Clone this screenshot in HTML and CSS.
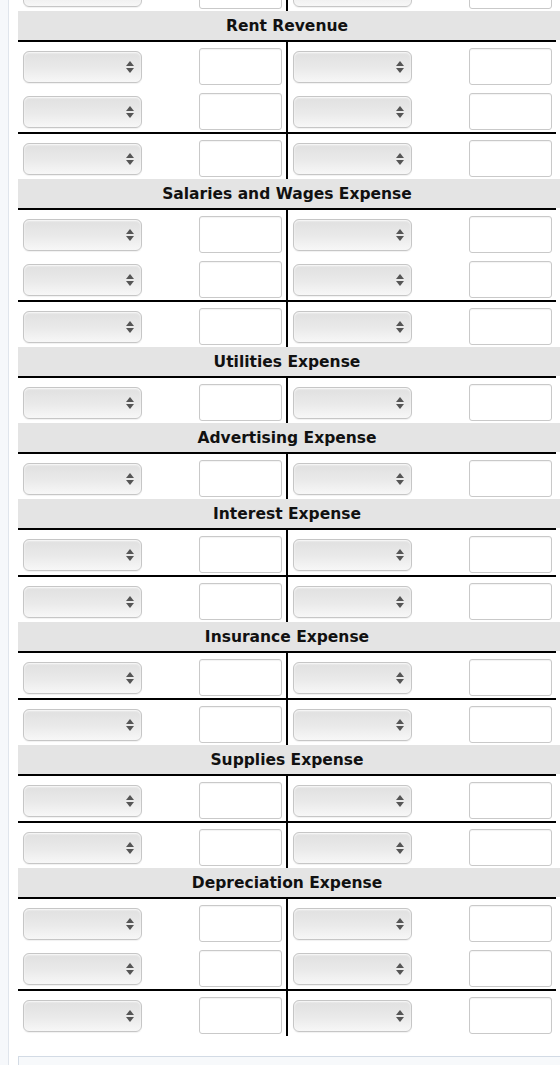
FILE: index.html
```html
<!DOCTYPE html>
<html lang="en">
<head>
<meta charset="utf-8">
<title>T-Accounts</title>
<link rel="stylesheet" href="styles.css">
</head>
<body>
<div class="rail"></div>
<main class="main">
  <div class="ledger">
    <!-- closing row of the account above -->
    <div class="acct-body lead">
      <div class="row">
        <div class="side"><span class="pick"><select></select></span><input type="text"></div>
        <div class="side"><span class="pick"><select></select></span><input type="text"></div>
      </div>
    </div>

    <section class="acct">
      <h3 class="acct-title">Rent Revenue</h3>
      <div class="acct-body">
        <div class="row"><div class="side"><span class="pick"><select></select></span><input type="text"></div><div class="side"><span class="pick"><select></select></span><input type="text"></div></div>
        <div class="row"><div class="side"><span class="pick"><select></select></span><input type="text"></div><div class="side"><span class="pick"><select></select></span><input type="text"></div></div>
        <div class="row total"><div class="side"><span class="pick"><select></select></span><input type="text"></div><div class="side"><span class="pick"><select></select></span><input type="text"></div></div>
      </div>
    </section>

    <section class="acct">
      <h3 class="acct-title">Salaries and Wages Expense</h3>
      <div class="acct-body">
        <div class="row"><div class="side"><span class="pick"><select></select></span><input type="text"></div><div class="side"><span class="pick"><select></select></span><input type="text"></div></div>
        <div class="row"><div class="side"><span class="pick"><select></select></span><input type="text"></div><div class="side"><span class="pick"><select></select></span><input type="text"></div></div>
        <div class="row total"><div class="side"><span class="pick"><select></select></span><input type="text"></div><div class="side"><span class="pick"><select></select></span><input type="text"></div></div>
      </div>
    </section>

    <section class="acct">
      <h3 class="acct-title">Utilities Expense</h3>
      <div class="acct-body">
        <div class="row"><div class="side"><span class="pick"><select></select></span><input type="text"></div><div class="side"><span class="pick"><select></select></span><input type="text"></div></div>
      </div>
    </section>

    <section class="acct">
      <h3 class="acct-title">Advertising Expense</h3>
      <div class="acct-body">
        <div class="row"><div class="side"><span class="pick"><select></select></span><input type="text"></div><div class="side"><span class="pick"><select></select></span><input type="text"></div></div>
      </div>
    </section>

    <section class="acct">
      <h3 class="acct-title">Interest Expense</h3>
      <div class="acct-body">
        <div class="row"><div class="side"><span class="pick"><select></select></span><input type="text"></div><div class="side"><span class="pick"><select></select></span><input type="text"></div></div>
        <div class="row total"><div class="side"><span class="pick"><select></select></span><input type="text"></div><div class="side"><span class="pick"><select></select></span><input type="text"></div></div>
      </div>
    </section>

    <section class="acct">
      <h3 class="acct-title">Insurance Expense</h3>
      <div class="acct-body">
        <div class="row"><div class="side"><span class="pick"><select></select></span><input type="text"></div><div class="side"><span class="pick"><select></select></span><input type="text"></div></div>
        <div class="row total"><div class="side"><span class="pick"><select></select></span><input type="text"></div><div class="side"><span class="pick"><select></select></span><input type="text"></div></div>
      </div>
    </section>

    <section class="acct">
      <h3 class="acct-title">Supplies Expense</h3>
      <div class="acct-body">
        <div class="row"><div class="side"><span class="pick"><select></select></span><input type="text"></div><div class="side"><span class="pick"><select></select></span><input type="text"></div></div>
        <div class="row total"><div class="side"><span class="pick"><select></select></span><input type="text"></div><div class="side"><span class="pick"><select></select></span><input type="text"></div></div>
      </div>
    </section>

    <section class="acct">
      <h3 class="acct-title">Depreciation Expense</h3>
      <div class="acct-body">
        <div class="row"><div class="side"><span class="pick"><select></select></span><input type="text"></div><div class="side"><span class="pick"><select></select></span><input type="text"></div></div>
        <div class="row"><div class="side"><span class="pick"><select></select></span><input type="text"></div><div class="side"><span class="pick"><select></select></span><input type="text"></div></div>
        <div class="row total"><div class="side"><span class="pick"><select></select></span><input type="text"></div><div class="side"><span class="pick"><select></select></span><input type="text"></div></div>
      </div>
    </section>
  </div>
  <div class="footer-box"></div>
</main>
</body>
</html>
```

FILE: styles.css
```css
html, body {
  margin: 0;
  padding: 0;
  background: #fff;
  height: 100%;
  overflow: hidden;
}

body {
  display: flex;
  font-family: "DejaVu Sans", Verdana, sans-serif;
}

/* pale strip on the far left */
.rail {
  flex: 0 0 8px;
  background: #f6f8fb;
  border-right: 1px solid #e0e5ec;
}

.main {
  flex: 1;
  padding-left: 9px;
  display: flex;
  flex-direction: column;
}

.ledger {
  margin-top: -34px;
}

.acct {
  margin: 0;
}

.acct-title {
  margin: 0;
  height: 29px;
  line-height: 31px;
  overflow: hidden;
  background: #e4e4e4;
  text-align: center;
  font-size: 15.5px;
  font-weight: bold;
  color: #111;
  padding-right: 4px;
}

.acct-body {
  margin-right: 4px;
  border-top: 2px solid #000;
}

.acct-body.lead {
  border-top: 0;
}

.row {
  display: flex;
  height: 45px;
}

.row.total {
  border-top: 2px solid #000;
}

.side {
  flex: 0 0 268px;
  box-sizing: border-box;
  display: flex;
  justify-content: space-between;
  align-items: center;
  padding: 4px 4px 0 5px;
}

/* debit side carries the T-account's centre rule */
.side:first-child {
  flex-basis: 270px;
  border-right: 2px solid #000;
}

/* aqua-style popup menu */
.pick {
  position: relative;
  display: block;
  width: 119px;
  height: 32px;
}

.pick select {
  -webkit-appearance: none;
  appearance: none;
  display: block;
  width: 100%;
  height: 100%;
  margin: 0;
  padding: 0;
  box-sizing: border-box;
  border: 1px solid #c6c6c6;
  border-radius: 6px;
  background: linear-gradient(#e0e0e0 0%, #eaeaea 55%, #f7f7f7 100%);
  box-shadow: inset 0 1px 2px rgba(255, 255, 255, 0.9), 0 1px 1px rgba(0, 0, 0, 0.06);
}

.pick::before,
.pick::after {
  content: "";
  position: absolute;
  right: 8px;
  width: 0;
  height: 0;
  border-left: 4px solid transparent;
  border-right: 4px solid transparent;
  pointer-events: none;
}

.pick::before {
  top: 10px;
  border-bottom: 5px solid #555;
}

.pick::after {
  top: 17px;
  border-top: 5px solid #555;
}

.side input {
  display: block;
  width: 83px;
  height: 37px;
  margin: 0;
  padding: 0 4px;
  box-sizing: border-box;
  border: 1px solid #c9c9c9;
  border-radius: 3px;
  background: #fff;
  box-shadow: inset 0 1px 1px rgba(0, 0, 0, 0.05);
  font: 13px "DejaVu Sans", sans-serif;
}

.footer-box {
  margin-top: 20px;
  flex: 1;
  border: 1px solid #d3dbe5;
  border-bottom: 0;
  border-right: 0;
  background: #f7f9fb;
  min-height: 20px;
}
```
